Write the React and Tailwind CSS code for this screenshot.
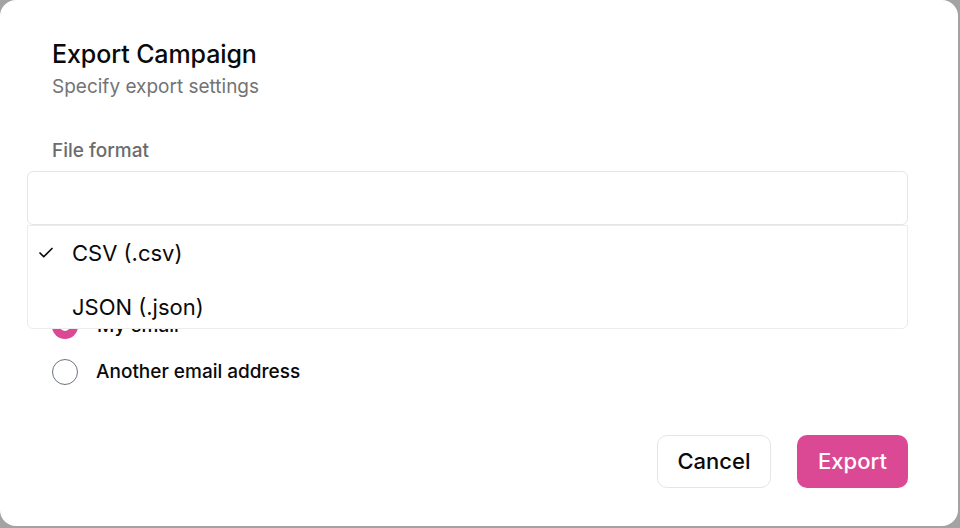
import React from "react";
import { Check } from "lucide-react";

export default function App() {
  return (
    <div className="w-[960px] h-[528px] bg-[#a3a3a3] font-['Inter',sans-serif]">
      <div className="relative w-[958px] h-[526px] bg-white rounded-[16px] flex flex-col">
        <div className="pl-[52px] pr-[52px] pt-[38px] flex flex-col">
          <h1 className="text-[25px] leading-[32px] font-medium text-[#0a0a0a] tracking-[-0.1px]">Export Campaign</h1>
          <p className="text-[19px] leading-[24px] text-[#737373] mt-[5px]">Specify export settings</p>
          <label className="mt-[40px] text-[19px] leading-[24px] font-medium text-[#6b6b6b]">File format</label>
        </div>
        <div className="ml-[27px] mr-[50px] mt-[8px] h-[54px] border border-[#e5e5e5] rounded-[6px]" />
        <div className="pl-[52px] pr-[50px] flex flex-col">
          <div className="mt-[40px] text-[19px] leading-[24px] font-medium text-[#6b6b6b]">Send to</div>
          <div className="mt-[24px] flex flex-col gap-[20px]">
            <div className="flex items-center gap-[19px]">
              <span className="w-[26px] h-[26px] rounded-full bg-[#db4994] flex items-center justify-center">
                <span className="w-[10px] h-[10px] rounded-full bg-white" />
              </span>
              <span className="text-[19px] leading-[24px] font-medium text-[#0a0a0a]">My email</span>
            </div>
            <div className="flex items-center gap-[18px]">
              <span className="w-[26px] h-[26px] rounded-full border border-[#6b7280]" />
              <span className="text-[19px] leading-[24px] font-medium text-[#0a0a0a]">Another email address</span>
            </div>
          </div>
          <div className="mt-[50px] flex justify-end gap-[26px]">
            <button className="w-[114px] h-[53px] rounded-[10px] border border-[#e5e5e5] bg-white text-[22px] font-medium text-[#0a0a0a]">Cancel</button>
            <button className="w-[111px] h-[53px] rounded-[10px] bg-[#db4994] text-[22px] font-medium text-white">Export</button>
          </div>
        </div>

        <div className="absolute left-[27px] top-[225px] w-[881px] h-[104px] bg-white border border-[#ececec] rounded-b-[6px] overflow-hidden flex flex-col">
          <div className="h-[54px] shrink-0 flex items-center pl-[9px]">
            <Check className="w-[18px] h-[18px] text-[#0a0a0a] shrink-0" strokeWidth={2.2} />
            <span className="ml-[17px] text-[22px] text-[#0a0a0a]">CSV (.csv)</span>
          </div>
          <div className="h-[54px] shrink-0 flex items-center pl-[44px]">
            <span className="text-[22px] text-[#0a0a0a]">JSON (.json)</span>
          </div>
        </div>
      </div>
    </div>
  );
}
